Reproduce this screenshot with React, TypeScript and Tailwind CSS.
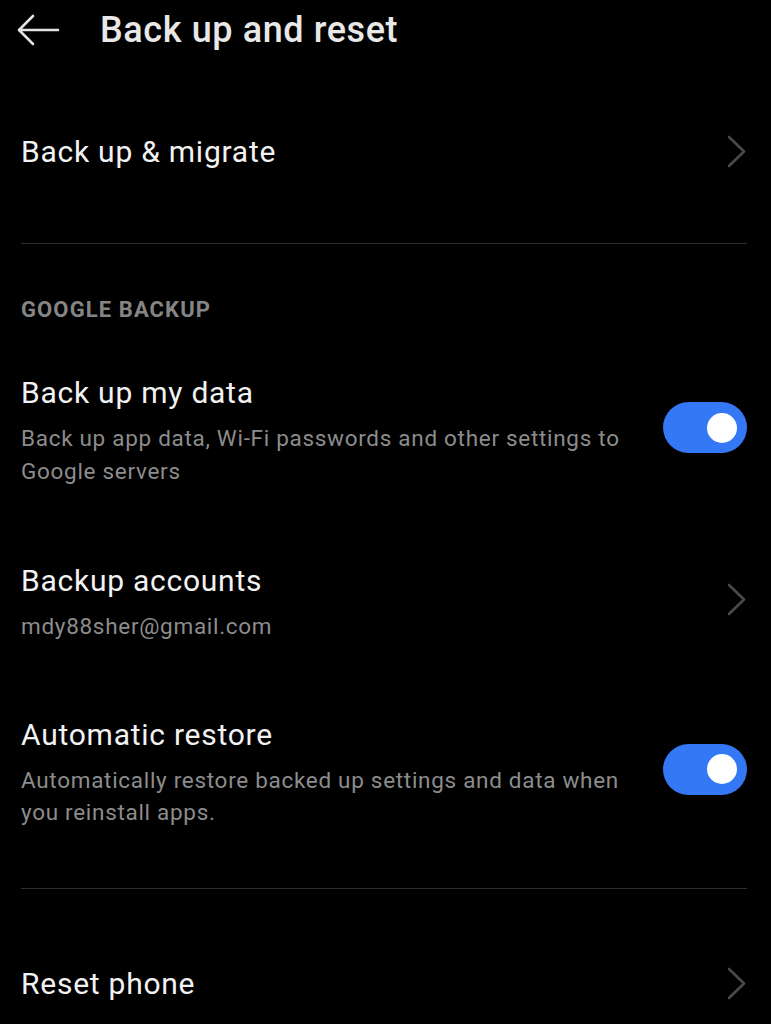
import React from "react";

const Chevron = ({ className = "" }: { className?: string }) => (
  <svg width="20" height="33" viewBox="0 0 20 33" fill="none" className={`flex-shrink-0 ${className}`}>
    <path d="M2 2 L17 16.5 L2 31" stroke="#4a4a4a" strokeWidth="2.6" strokeLinecap="round" strokeLinejoin="round" />
  </svg>
);

const Toggle = () => (
  <div className="mt-[29px] w-[84px] h-[51px] rounded-full bg-[#3478f6] flex items-center justify-end pr-[10px] flex-shrink-0">
    <div className="w-[30px] h-[30px] rounded-full bg-white" />
  </div>
);

const Divider = () => <div className="h-px bg-[#2e2e2e] ml-[21px] mr-[24px]" />;

const Item = ({
  title,
  sub,
  right,
  className = "",
}: {
  title: string;
  sub?: React.ReactNode;
  right: React.ReactNode;
  className?: string;
}) => (
  <div className={`flex items-start justify-between pl-[21px] pr-[24px] ${className}`}>
    <div className="w-[628px]">
      <div className="text-[30px] leading-[40px] tracking-[0.75px] text-[#f2f2f2]">{title}</div>
      {sub && (
        <div className="mt-[9px] text-[22.5px] leading-[32.5px] tracking-[0.7px] text-[#8c8c8c]">{sub}</div>
      )}
    </div>
    {right}
  </div>
);

export default function App() {
  return (
    <div className="w-[771px] h-[1024px] bg-black overflow-hidden" style={{ fontFamily: "Roboto, 'Noto Sans', sans-serif" }}>
      {/* Header */}
      <div className="h-[60px] flex items-center">
        <svg width="44" height="34" viewBox="0 0 44 34" fill="none" className="ml-[16px]">
          <path d="M42 17 H4 M17 3 L3 17 L17 31" stroke="#e4e4e4" strokeWidth="2.6" strokeLinecap="round" strokeLinejoin="round" />
        </svg>
        <div className="ml-[40px] text-[36px] font-medium tracking-[0.6px] text-[#e8e8e8] leading-[40px]">Back up and reset</div>
      </div>

      <div className="h-[183px] flex items-center justify-between pl-[21px] pr-[24px]">
        <div className="text-[30px] leading-[40px] tracking-[0.75px] text-[#f2f2f2]">Back up &amp; migrate</div>
        <Chevron />
      </div>

      <Divider />

      <div className="pt-[52px] pl-[21px] text-[22px] leading-[28px] font-bold tracking-[1.1px] text-[#858585]">
        GOOGLE BACKUP
      </div>

      <Item
        className="mt-[49px]"
        title="Back up my data"
        sub="Back up app data, Wi-Fi passwords and other settings to Google servers"
        right={<Toggle />}
      />

      <Item
        className="mt-[74px]"
        title="Backup accounts"
        sub="mdy88sher@gmail.com"
        right={<Chevron className="mt-[22px]" />}
      />

      <Item
        className="mt-[72px]"
        title="Automatic restore"
        sub="Automatically restore backed up settings and data when you reinstall apps."
        right={<Toggle />}
      />

      <div className="mt-[59px]">
        <Divider />
      </div>

      <div className="mt-[75px] flex items-center justify-between pl-[21px] pr-[24px]">
        <div className="text-[30px] leading-[40px] tracking-[0.75px] text-[#f2f2f2]">Reset phone</div>
        <Chevron />
      </div>
    </div>
  );
}
